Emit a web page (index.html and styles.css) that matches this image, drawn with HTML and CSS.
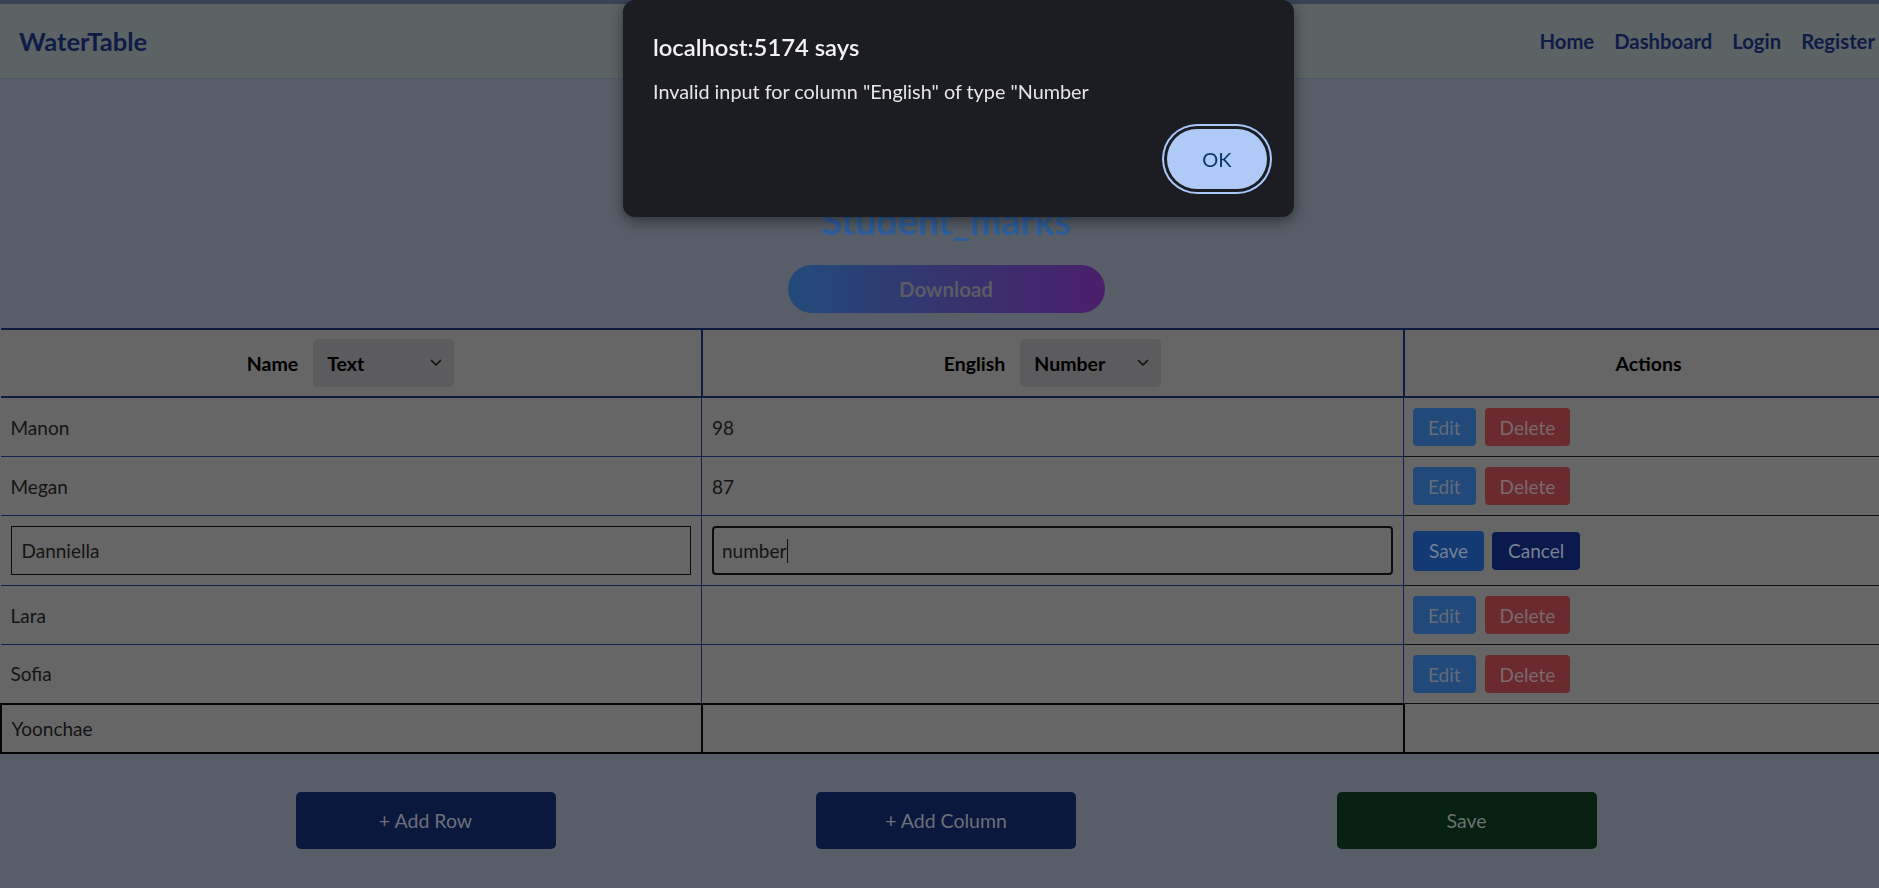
FILE: index.html
```html
<!DOCTYPE html>
<html lang="en">
<head>
<meta charset="utf-8">
<title>WaterTable</title>
<link rel="stylesheet" href="styles.css">
</head>
<body>
<div class="page">
  <header class="topbar">
    <a class="brand" href="#">WaterTable</a>
    <nav class="nav">
      <a href="#">Home</a>
      <a href="#">Dashboard</a>
      <a href="#">Login</a>
      <a href="#">Register</a>
    </nav>
  </header>

  <main class="main">
    <h1 class="title">Student_marks</h1>
    <button class="download" type="button">Download</button>

    <table class="grid">
      <colgroup>
        <col class="col-name">
        <col class="col-eng">
        <col class="col-act">
      </colgroup>
      <thead>
        <tr>
          <th>
            <div class="th-inner">
              <span>Name</span>
              <div class="select"><span>Text</span><svg class="chev" viewBox="0 0 12 8" width="12" height="8"><path d="M1.5 1.5 L6 6 L10.5 1.5" fill="none" stroke="#111" stroke-width="1.7" stroke-linecap="round" stroke-linejoin="round"/></svg></div>
            </div>
          </th>
          <th>
            <div class="th-inner">
              <span>English</span>
              <div class="select"><span>Number</span><svg class="chev" viewBox="0 0 12 8" width="12" height="8"><path d="M1.5 1.5 L6 6 L10.5 1.5" fill="none" stroke="#111" stroke-width="1.7" stroke-linecap="round" stroke-linejoin="round"/></svg></div>
            </div>
          </th>
          <th class="th-act">Actions</th>
        </tr>
      </thead>
      <tbody>
        <tr>
          <td>Manon</td>
          <td>98</td>
          <td class="act"><div class="btns"><button class="btn edit" type="button">Edit</button><button class="btn del" type="button">Delete</button></div></td>
        </tr>
        <tr>
          <td>Megan</td>
          <td>87</td>
          <td class="act"><div class="btns"><button class="btn edit" type="button">Edit</button><button class="btn del" type="button">Delete</button></div></td>
        </tr>
        <tr class="editing">
          <td><div class="field">Danniella</div></td>
          <td><div class="field focus">number<span class="caret"></span></div></td>
          <td class="act"><div class="btns"><button class="btn save" type="button">Save</button><button class="btn cancel" type="button">Cancel</button></div></td>
        </tr>
        <tr>
          <td>Lara</td>
          <td></td>
          <td class="act"><div class="btns"><button class="btn edit" type="button">Edit</button><button class="btn del" type="button">Delete</button></div></td>
        </tr>
        <tr>
          <td>Sofia</td>
          <td></td>
          <td class="act"><div class="btns"><button class="btn edit" type="button">Edit</button><button class="btn del" type="button">Delete</button></div></td>
        </tr>
        <tr class="newrow">
          <td>Yoonchae</td>
          <td></td>
          <td class="act"></td>
        </tr>
      </tbody>
    </table>

    <div class="bottom-actions">
      <button class="big navy" type="button">+ Add Row</button>
      <button class="big navy" type="button">+ Add Column</button>
      <button class="big green" type="button">Save</button>
    </div>
  </main>
</div>

<div class="alert" role="alertdialog">
  <div class="alert-title">localhost:5174 says</div>
  <div class="alert-msg">Invalid input for column "English" of type "Number</div>
  <div class="alert-actions"><button class="ok" type="button">OK</button></div>
</div>
</body>
</html>
```

FILE: styles.css
```css
html, body {
  margin: 0;
  padding: 0;
  overflow: hidden;
  background: #575e67;
  font-family: Lato, "Open Sans", "Noto Sans", sans-serif;
}

.page {
  width: 1892px;
}

/* ---------- top bar ---------- */
.topbar {
  box-sizing: border-box;
  height: 79px;
  border-top: 4px solid #3a4357;
  border-bottom: 1px solid #4e5969;
  background: #5b6364;
  display: flex;
  align-items: center;
  justify-content: space-between;
  padding: 0 17px 0 19px;
}

.brand {
  color: #0f1b47;
  font-weight: 700;
  font-size: 25.5px;
  text-decoration: none;
}

.nav {
  display: flex;
  gap: 20px;
}

.nav a {
  color: #0f1b47;
  font-weight: 700;
  font-size: 20.3px;
  text-decoration: none;
}

/* ---------- main ---------- */
.main {
  display: flex;
  flex-direction: column;
  align-items: center;
}

.title {
  margin: 120px 0 0;
  font-size: 37.5px;
  line-height: 44px;
  font-weight: 700;
  color: #2d5e9c;
}

.download {
  margin-top: 22px;
  width: 317px;
  height: 48px;
  border: none;
  border-radius: 24px;
  background: linear-gradient(90deg, #234a7b 0%, #35346f 50%, #4b1f6c 100%);
  color: #5a5c63;
  font-family: inherit;
  font-weight: 700;
  font-size: 20.5px;
}

/* ---------- table ---------- */
.grid {
  margin-top: 15px;
  width: 1892px;
  border-collapse: collapse;
  table-layout: fixed;
  border-top: 2px solid #0e1a41;
  background: #666666;
  color: #141414;
  font-size: 19px;
}

.col-name { width: 701px; }
.col-eng { width: 702px; }
.col-act { width: 489px; }

.grid th {
  border: 2px solid #0e1a41;
  padding: 9px 10px;
  font-weight: 700;
  color: #000;
  font-size: 19.5px;
}

.grid th:first-child { border-left: none; }
.grid th:last-child { border-right: none; }

.th-inner {
  display: flex;
  align-items: center;
  justify-content: center;
  gap: 15px;
}

.select {
  box-sizing: border-box;
  width: 141px;
  height: 48px;
  border-radius: 5px;
  background: #5c5c5e;
  display: flex;
  align-items: center;
  justify-content: space-between;
  padding: 0 12px 0 14px;
  font-weight: 700;
}

.chev { display: block; }

.grid td {
  border: 1px solid #142150;
  padding: 10px 10px;
  line-height: 29px;
  text-align: left;
}

.grid td:first-child { border-left: none; }
.grid td:last-child { border-right: none; }

.grid td.act {
  border-top-color: #111;
  border-bottom-color: #111;
  padding: 10px 9px;
}

.btns {
  display: flex;
  gap: 9px;
  align-items: center;
}

.btn {
  border: none;
  border-radius: 4px;
  font-family: inherit;
  font-size: 19px;
  height: 38px;
  padding: 0 15px;
}

.btn.edit { background: #21497a; color: #646c7a; }
.btn.del { background: #6b2a2d; color: #786a6d; }
.btn.save { background: #143a73; color: #738096; height: 40px; padding: 0 16px; }
.btn.cancel { background: #0b1a4d; color: #7a8294; height: 38px; padding: 0 16px; }

.editing .btns { gap: 8px; }

.field {
  box-sizing: border-box;
  height: 49px;
  border: 1px solid #0a0a0a;
  padding: 0 10px;
  display: flex;
  align-items: center;
  color: #141414;
}

.field.focus {
  border: 2px solid #0d0d0d;
  border-radius: 4px;
  padding: 0 8px;
}

.caret {
  display: inline-block;
  width: 1px;
  height: 24px;
  background: #111;
  margin-left: 1px;
}

.grid tr.newrow td {
  border: 2px solid #050505;
  line-height: 27px;
}

.grid tr.newrow td:first-child { border-left: 2px solid #050505; }

.grid tr.newrow td.act {
  border-left: 1px solid #050505;
  border-right: none;
  border-top: 1px solid #111;
}

/* ---------- bottom buttons ---------- */
.bottom-actions {
  margin-top: 38px;
  width: 1301px;
  display: flex;
  justify-content: space-between;
}

.big {
  width: 260px;
  height: 57px;
  border: none;
  border-radius: 5px;
  font-family: inherit;
  font-size: 19.5px;
}

.big.navy { background: #0b183d; color: #6b707b; }
.big.green { background: #062012; color: #6b716d; }

/* ---------- alert dialog ---------- */
.alert {
  position: fixed;
  left: 623px;
  top: 0;
  width: 671px;
  height: 217px;
  box-sizing: border-box;
  background: #1b1d22;
  border-radius: 12px;
  box-shadow: 0 4px 14px rgba(0, 0, 0, 0.45);
  padding: 33px 27px 28px 30px;
  display: flex;
  flex-direction: column;
}

.alert-title {
  color: #f2f2f2;
  font-size: 23.8px;
  line-height: 28px;
  font-weight: 600;
}

.alert-msg {
  margin-top: 18px;
  color: #e6e6e6;
  font-size: 19.8px;
  line-height: 24px;
}

.alert-actions {
  margin-top: auto;
  display: flex;
  justify-content: flex-end;
}

.ok {
  width: 100px;
  height: 60px;
  border: none;
  border-radius: 30px;
  background: #afcaf7;
  color: #0b3571;
  font-family: inherit;
  font-size: 20px;
  box-shadow: 0 0 0 3px #1b1d22, 0 0 0 5px #a8c7fa;
}
```
